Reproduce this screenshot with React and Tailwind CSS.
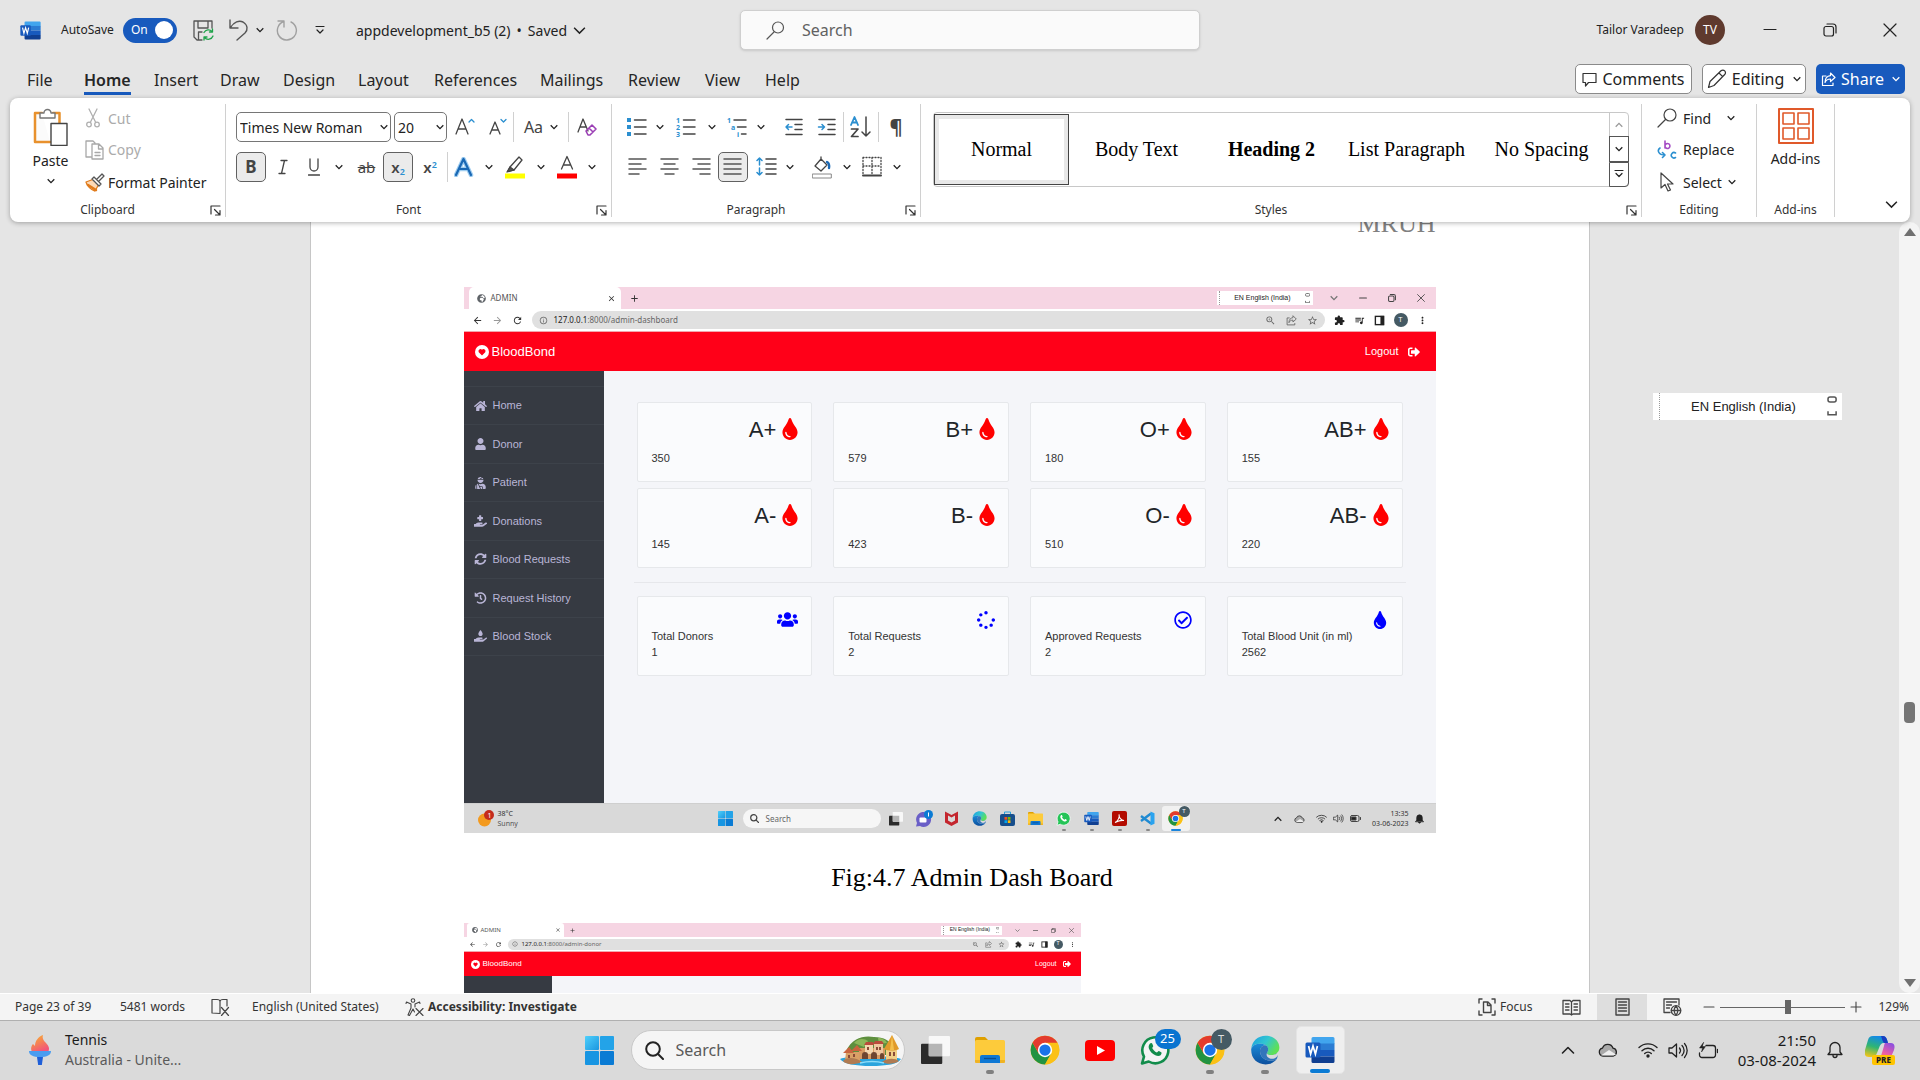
import React from "react";
import {
  FaHome, FaUser, FaUserInjured, FaHandHoldingMedical, FaSyncAlt, FaHistory,
  FaHandHoldingWater, FaUsers, FaSpinner, FaRegCheckCircle, FaTint, FaSignOutAlt, FaGlobeAfrica,
} from "react-icons/fa";
import {
  MdArrowBack, MdArrowForward, MdRefresh, MdInfoOutline, MdZoomIn, MdStarBorder,
  MdExtension, MdQueueMusic, MdMoreVert, MdClose, MdAdd,
} from "react-icons/md";

const ui = "font-['Noto_Sans','Open_Sans',sans-serif]";
const serif = "font-['Liberation_Serif','Times_New_Roman',serif]";
const arial = "font-['Liberation_Sans',Arial,sans-serif]";

/* ---------- small drawing helpers ---------- */

function Icon({ w = 20, h = w, box, className = "", children, sw = 1.3, color = "#444" }) {
  return (
    <svg width={w} height={h} viewBox={box || `0 0 ${w} ${h}`} fill="none" stroke={color} strokeWidth={sw}
      strokeLinecap="round" strokeLinejoin="round" className={`shrink-0 ${className}`} aria-hidden="true">
      {children}
    </svg>
  );
}

const Chevron = ({ color = "#222", size = 8 }) => (
  <svg width={size} height={size} viewBox="0 0 8 8" fill="none" stroke={color} strokeWidth={size > 8 ? 0.9 : 1.3} className="shrink-0" aria-hidden="true">
    <path d="M0.7 2.3 4 5.6l3.3-3.3" />
  </svg>
);

const Sep = () => <span className="h-[30px] w-px shrink-0 bg-[#d0d0d0]" />;

function Tool({ label, w, active, children }) {
  return (
    <button type="button" aria-label={label} aria-pressed={active}
      className={`flex h-[30px] shrink-0 items-center justify-center ${w} ${active ? "rounded-[5px] border border-[#616161] bg-[#ebebeb]" : ""}`}>
      {children}
    </button>
  );
}

const Drop = ({ label, w = "w-[22px]" }) => <Tool label={label} w={w}><Chevron /></Tool>;

function WordLogo({ className }) {
  return (
    <svg viewBox="0 0 30 30" className={className} aria-hidden="true">
      <path d="M8 2h20a1.500 1.500 0 0 1 1.500 1.500V9H6.500V3.500A1.500 1.500 0 0 1 8 2Z" fill="#41a5ee" />
      <path d="M6.500 8.500h23V15h-23z" fill="#2b7cd3" />
      <path d="M6.500 15h23v6.500h-23z" fill="#185abd" />
      <path d="M6.500 21.500h23v5A1.500 1.500 0 0 1 28 28H8a1.500 1.500 0 0 1-1.500-1.500z" fill="#103f91" />
      <rect x="0.500" y="7.500" width="15" height="15" rx="1.500" fill="#185abd" />
      <path d="m3.600 11 2 8 2.400-8 2.400 8 2-8" fill="none" stroke="#fff" strokeWidth="1.700" />
    </svg>
  );
}

function WindowsLogo({ className }) {
  return (
    <svg viewBox="0 0 30 30" className={className} aria-hidden="true">
      <defs>
        <linearGradient id="win" x1="0" y1="0" x2="1" y2="1" gradientUnits="objectBoundingBox">
          <stop offset="0" stopColor="#4fd0fb" /><stop offset="1" stopColor="#1a96e0" />
        </linearGradient>
      </defs>
      <rect x="0" y="0" width="14.500" height="14.500" rx="1" fill="url(#win)" />
      <rect x="15.500" y="0" width="14.500" height="14.500" rx="1" fill="#23a3e8" />
      <rect x="0" y="15.500" width="14.500" height="14.500" rx="1" fill="#1795e2" />
      <rect x="15.500" y="15.500" width="14.500" height="14.500" rx="1" fill="#0a7bd4" />
    </svg>
  );
}

function ChromeLogo({ className }) {
  return (
    <svg viewBox="0 0 48 48" className={className} aria-hidden="true">
      <circle cx="24" cy="24" r="23" fill="#fbc116" />
      <path d="M4.100 12.500A23 23 0 0 0 24 47l10-17.300L14 29.700Z" fill="#229342" />
      <path d="M24 12.500h19.900A23 23 0 0 1 24 47l10-17.500Z" fill="#fbc116" />
      <path d="M4.100 12.500A23 23 0 0 1 43.900 12.500H24L14 29.700Z" fill="#e33b2e" />
      <circle cx="24" cy="24" r="11.500" fill="#fff" />
      <circle cx="24" cy="24" r="9" fill="#1a73e8" />
    </svg>
  );
}

function EdgeLogo({ className }) {
  return (
    <svg viewBox="0 0 48 48" className={className} aria-hidden="true">
      <defs>
        <linearGradient id="edgeA" x1="0" y1="0" x2="1" y2="0.500">
          <stop offset="0" stopColor="#1b9de2" /><stop offset="0.550" stopColor="#32c7d0" /><stop offset="1" stopColor="#5fe055" />
        </linearGradient>
        <linearGradient id="edgeB" x1="0" y1="0" x2="0" y2="1">
          <stop offset="0" stopColor="#1a8bd8" /><stop offset="1" stopColor="#0c4f9e" />
        </linearGradient>
      </defs>
      <path d="M2 22C3 9 13 1 25 1c13 0 22 9 22 19 0 8-6 12-13 12-5 0-7-2-7-3s2-2 2-6c0-6-6-9-13-9C9 14 4 17 2 22Z" fill="url(#edgeA)" />
      <path d="M2 22c2-5 7-8 14-8 4 0 8 1 10 3-6-1-10 3-10 9 0 9 8 15 17 15 4 0 8-1 10-3-4 6-11 9-18 9C11 47 1 37 2 22Z" fill="url(#edgeB)" />
      <path d="M16 26c0-6 4-10 10-9 2 1 3 3 3 6 0 4-2 5-2 6s2 3 7 3c4 0 7-1 9-3 2 2 1 7 0 9-2 2-6 3-10 3-9 0-17-6-17-15Z" fill="#1563b5" opacity="0.850" />
      <path d="M27 29c0 1 2 3 7 3 5 0 8-1 11-5 1 1 1 4-1 6-2 4-6 5-9 5-5 0-10-4-8-9Z" fill="#dadada" />
    </svg>
  );
}

function FolderLogo({ className }) {
  return (
    <svg viewBox="0 0 30 28" className={className} aria-hidden="true">
      <path d="M0 3a2 2 0 0 1 2-2h8l3 3v5H0Z" fill="#dfa000" />
      <rect x="0" y="4" width="30" height="23" rx="1.500" fill="#fdcb3b" />
      <path d="M0 24h30v1.500a1.500 1.500 0 0 1-1.500 1.500h-27A1.500 1.500 0 0 1 0 25.500Z" fill="#f0b323" />
      <path d="M5 27v-6a2 2 0 0 1 2-2h16a2 2 0 0 1 2 2v6Z" fill="#0f78d4" />
      <path d="M9 22.500h12" stroke="#0b4f94" strokeWidth="1.400" />
    </svg>
  );
}

function TaskViewLogo({ className }) {
  return (
    <svg viewBox="0 0 30 30" className={className} aria-hidden="true">
      <rect x="0" y="8" width="22" height="21" rx="1" fill="#2b2b2b" />
      <rect x="8" y="0" width="22" height="21" rx="1" fill="#f8f8f8" />
      <path d="M8 8h14v13H9a1 1 0 0 1-1-1Z" fill="#b5b5b5" />
    </svg>
  );
}

function WhatsAppLogo({ className, solid }) {
  return (
    <svg viewBox="0 0 30 30" className={className} aria-hidden="true">
      <path d="M2 28.500 4 21.700A13 13 0 1 1 8.700 26.500Z" fill={solid ? "#25c457" : "#f4f4f4"} stroke={solid ? "#fff" : "#128c4b"} strokeWidth={solid ? 1.500 : 2.600} strokeLinejoin="round" />
      <path d="M10 8.500c1-1 2-.5 2.300.3l.9 2.200c.2.500-1 1.700-1 2.100.8 1.900 2.500 3.500 4.600 4.500.5.100 1.500-1.700 2.100-1.500l2.300 1.200c.7.400.4 2-.6 2.900-1.300 1.100-3.200 1-5.300.1-3-1.300-5.500-3.900-6.400-6.700-.7-2 .1-4.200 1.100-5.100Z" fill={solid ? "#fff" : "#128c4b"} />
    </svg>
  );
}

/* ---------- title bar and tabs ---------- */

function TitleBar() {
  return (
    <header className="flex h-[60px] shrink-0 items-center">
      <div className="flex min-w-0 flex-1 items-center pl-5">
        <WordLogo className="h-[21px] w-[21px]" />
        <label htmlFor="autosave" className="ml-[20px] w-[62px] text-[12px] text-[#222]">AutoSave</label>
        <label className="relative flex h-[25px] w-[54px] cursor-pointer items-center rounded-full bg-[#185abd] pl-2 text-[12px] text-white">
          <input id="autosave" type="checkbox" role="switch" defaultChecked className="peer sr-only" />
          On
          <span className="absolute right-[4px] h-[18px] w-[18px] rounded-full bg-white" />
        </label>
        <button type="button" aria-label="Save" className="ml-[16px]">
          <Icon w={21} sw={1.3} color="#555">
            <path d="M9 20H4l-3-3V1h18v7M5 1v7h10V1M5.500 19v-7H9" />
            <path d="M11 12.500a5 5 0 0 1 8-1m.5-2.500v3h-3M20 16a5 5 0 0 1-8.500 1.500M11 20v-3h3" stroke="#1fa34a" />
          </Icon>
        </button>
        <button type="button" aria-label="Undo" className="ml-[15px]">
          <Icon w={20} h={22} sw={1.4} color="#555"><path d="M1 1v8h8M1.500 8.500C5 3 10 1 14 3c5 3 5 8 2 11l-8 7" /></Icon>
        </button>
        <button type="button" aria-label="Undo history" className="ml-[7px]"><Chevron /></button>
        <button type="button" aria-label="Redo" className="ml-[12px]">
          <Icon w={22} h={22} sw={1.4} color="#a0a0a0"><path d="M2 2h6v6M8 2.500A9.500 9.500 0 1 0 15 3" /></Icon>
        </button>
        <button type="button" aria-label="Customize toolbar" className="ml-[17px]">
          <Icon w={10} h={10} sw={1.2} color="#222"><path d="M1 1.500h8M2 5l3 3 3-3" /></Icon>
        </button>
        <button type="button" className="ml-[31px] flex items-center gap-[6px] text-[14px] whitespace-nowrap text-[#222]">
          <span>appdevelopment_b5 (2)</span><span>•</span><span>Saved</span><Chevron size={13} />
        </button>
      </div>
      <div className="flex h-[40px] w-[460px] shrink-0 items-center rounded-[5px] border border-[#cfcfcf] bg-[#fafafa] pl-[25px] shadow-sm">
        <Icon w={19} h={19} sw={1.2} color="#555"><circle cx="12" cy="6.500" r="5.500" /><path d="m8 11-7 7" /></Icon>
        <input aria-label="Search" placeholder="Search" className="ml-[17px] min-w-0 flex-1 bg-transparent text-[16px] outline-none placeholder:text-[#616161]" />
      </div>
      <div className="flex min-w-0 flex-1 items-center justify-end">
        <button type="button" className="flex items-center gap-[11px] text-[12px] whitespace-nowrap text-[#222]">
          Tailor Varadeep
          <span className="flex h-[30px] w-[30px] items-center justify-center rounded-full bg-[#5f3a2e] text-[12px] text-white">TV</span>
        </button>
        <div className="ml-[15px] flex">
          <button type="button" aria-label="Minimize" className="flex w-[60px] justify-center"><Icon w={14} sw={1.2} color="#222"><path d="M1 6.500h12" /></Icon></button>
          <button type="button" aria-label="Restore" className="flex w-[60px] justify-center"><Icon w={14} sw={1.2} color="#222"><rect x="1" y="3.500" width="9.500" height="9.500" rx="2" /><path d="M4 1h6a3 3 0 0 1 3 3v6" /></Icon></button>
          <button type="button" aria-label="Close" className="flex w-[60px] justify-center"><Icon w={14} sw={1.2} color="#222"><path d="m1 1 12 12M13 1 1 13" /></Icon></button>
        </div>
      </div>
    </header>
  );
}

const tabs = [
  ["File", "w-[57px]"], ["Home", "w-[70px]"], ["Insert", "w-[66px]"], ["Draw", "w-[63px]"], ["Design", "w-[75px]"],
  ["Layout", "w-[76px]"], ["References", "w-[106px]"], ["Mailings", "w-[88px]"], ["Review", "w-[77px]"], ["View", "w-[60px]"], ["Help", "w-[50px]"],
];

function Tabs() {
  return (
    <div className="flex h-[38px] shrink-0 items-start justify-between pr-[15px] pl-[27px]">
      <nav className="flex text-[16px] leading-[24px] text-[#262626]">
        {tabs.map(([name, w]) => (
          <div key={name} className={`pt-[7px] ${w}`}>
            <button type="button" className={name === "Home" ? "h-[28px] border-b-[3px] border-[#185abd] font-semibold" : "h-[28px] border-b-[3px] border-transparent"}>{name}</button>
          </div>
        ))}
      </nav>
      <div className="flex gap-[10px] pt-[4px] text-[16px] whitespace-nowrap">
        <button type="button" className="flex h-[30px] w-[117px] items-center justify-center gap-[5px] rounded-[5px] border border-[#8a8a8a] bg-white text-[#222]">
          <Icon w={15} sw={1.2} color="#333"><path d="M1 1.500h13v9H6.500L3.500 14v-3.500H1Z" /></Icon>Comments
        </button>
        <button type="button" className="flex h-[30px] w-[104px] items-center justify-center gap-[5px] rounded-[5px] border border-[#8a8a8a] bg-white text-[#222]">
          <Icon w={20} sw={1.2} color="#333"><path d="m1.500 18.500 1.500-6L14 1.800a2.500 2.500 0 0 1 3.700 3.700L7 16.500ZM12 4l3.700 3.700" /></Icon>Editing<span className="ml-1"><Chevron /></span>
        </button>
        <button type="button" className="flex h-[30px] w-[89px] items-center justify-center gap-[5px] rounded-[5px] bg-[#185abd] text-white">
          <Icon w={15} sw={1.2} color="#fff"><path d="M5 4H1.500v9.500H12V11M9.500 1l4.500 4.500L9.500 9.500V7C7 7 5 8 4 10.500 4 6.500 6 4 9.500 3.600Z" /></Icon>Share<span className="ml-[3px]"><Chevron color="#fff" /></span>
        </button>
      </div>
    </div>
  );
}

/* ---------- ribbon ---------- */

const Launcher = () => (
  <button type="button" aria-label="More options" className="flex w-[20px] justify-center">
    <Icon w={11} sw={1.2} color="#333"><path d="M1 9V1h9M4.500 4.500l5 5M10 5.500V10H5.500" /></Icon>
  </button>
);

function Group({ title, w, launcher = true, children }) {
  return (
    <section aria-label={title} className={`flex h-[113px] flex-col border-r border-[#d0d0d0] ${w}`}>
      <div className="min-h-0 flex-1">{children}</div>
      <div className="flex h-[14px] items-center text-[12px] text-[#333]">
        <span className="flex-1 text-center">{title}</span>
        {launcher && <Launcher />}
      </div>
    </section>
  );
}

function Clipboard() {
  const item = "flex items-center gap-[7px] text-[14px] whitespace-nowrap";
  return (
    <Group title="Clipboard" w="w-[216px] shrink-0">
      <div className="flex">
        <button type="button" className="flex w-[75px] flex-col items-center pt-[4px] pl-[6px] text-[14px] text-[#222]">
          <Icon w={35} h={38} sw={1.4} color="#555">
            <path d="M9 5H2v29h15" fill="#fbfbfb" stroke="#e8912d" strokeWidth="2.500" />
            <path d="M20 5h6.500v10" stroke="#e8912d" strokeWidth="2.500" />
            <path d="M7 10V5h4a3.500 3.500 0 0 1 7 0h4v5Z" fill="#fff" stroke="#767676" />
            <rect x="18" y="15.500" width="16" height="22" fill="#fff" stroke="#444" />
          </Icon>
          <span className="mt-[5px] leading-[20px]">Paste</span>
          <span className="mt-[6px]"><Chevron /></span>
        </button>
        <div>
          <button type="button" className={`${item} h-[28px] text-[#ababab]`}>
            <span className="flex w-[16px] justify-center"><Icon w={14} h={20} color="#b0b0b0"><path d="m3 1 6.500 13M11 1 4.500 14" /><circle cx="3" cy="16.500" r="2.300" /><circle cx="11" cy="16.500" r="2.300" /></Icon></span>Cut
          </button>
          <button type="button" className={`${item} h-[35px] text-[#ababab]`}>
            <Icon w={19} h={20} color="#a8a8a8" className="-mr-[3px]"><path d="M6 17H1V1h7l2 2M7 4h7l4 4v11H7ZM13.500 4v5H18M10 12.500h5M10 15.500h5" /></Icon>Copy
          </button>
          <button type="button" className={`${item} h-[30px] text-[#222]`}>
            <Icon w={20} h={19} className="-mr-[4px]" color="#555"><path d="M1 9 9 6l5 5-4 7C6 17 2 13 1 9Z" fill="#fdd9b5" stroke="#e07b1c" /><path d="m3 12 8 5" stroke="#e07b1c" strokeWidth="2.500" /><path d="m7 6 2-2 7 7-2 2ZM12 6l5-5 2 2-5 5" fill="#fff" /></Icon>Format Painter
          </button>
        </div>
      </div>
    </Group>
  );
}

const Glyph = ({ children, className = "" }) => <span className={`text-[#444] ${className}`}>{children}</span>;

function FontGroup() {
  const sel = "h-[30px] w-full appearance-none rounded-[5px] border border-[#767676] bg-white pl-[3px] text-[14px] text-[#222]";
  return (
    <Group title="Font" w="w-[386px] shrink-0">
      <div className="flex pt-[8px] pl-[10px]">
        <span className="relative mr-[3px] flex w-[155px] items-center">
          <select aria-label="Font" className={sel}><option>Times New Roman</option></select>
          <span className="pointer-events-none absolute right-[3px]"><Chevron /></span>
        </span>
        <span className="relative flex w-[53px] items-center">
          <select aria-label="Font size" className={sel}><option>20</option></select>
          <span className="pointer-events-none absolute right-[3px]"><Chevron /></span>
        </span>
        <Tool label="Grow font" w="w-[36px]"><Icon w={20} h={20}><path d="m1 17 6-15 6 15M3 12h8" /><path d="m14 5 2.500-2.500L19 5" stroke="#2b8fd0" /></Icon></Tool>
        <Tool label="Shrink font" w="w-[30px]"><Icon w={18} h={20}><path d="m1 17 5-12 5 12M3 13h6" /><path d="m12 2.500 2.500 2.500L17 2.500" stroke="#2b8fd0" /></Icon></Tool>
        <Sep />
        <Tool label="Change case" w="w-[54px]"><Glyph className="mr-[7px] text-[16px]">Aa</Glyph><Chevron /></Tool>
        <Sep />
        <Tool label="Clear formatting" w="w-[36px]"><Icon w={21} h={20}><path d="m1 15 5-13 5 12M3 10h6" /><path d="m9 14 6-6 4 4-6 6h-2Zm3-3 4 4" stroke="#9b3fb5" strokeWidth="1.600" /></Icon></Tool>
      </div>
      <div className="flex pt-[10px] pl-[10px]">
        <Tool label="Bold" w="w-[30px]" active><Glyph className="text-[17px] font-bold">B</Glyph></Tool>
        <Tool label="Italic" w="w-[34px]"><Icon w={10} h={16}><path d="M3 1.500h6M1 14.500h6M6.500 1.500l-3 13" /></Icon></Tool>
        <Tool label="Underline" w="w-[28px]"><Icon w={12} h={18}><path d="M2 1v8a4 4 0 0 0 8 0V1M.5 17h11" /></Icon></Tool>
        <Drop label="Underline style" />
        <Tool label="Strikethrough" w="w-[33px]"><Glyph className="text-[15px] line-through">ab</Glyph></Tool>
        <Tool label="Subscript" w="w-[30px]" active><Glyph className="text-[15px] font-semibold">x<sub className="text-[9px] text-[#2b8fd0]">2</sub></Glyph></Tool>
        <Tool label="Superscript" w="w-[34px]"><Glyph className="text-[15px] font-semibold">x<sup className="text-[9px] text-[#2b8fd0]">2</sup></Glyph></Tool>
        <Sep />
        <Tool label="Text effects" w="w-[32px]"><Icon w={20} h={20}><path d="m2 18 7.500-16 7.500 16M5 12h9" stroke="#9fcdf0" strokeWidth="4.500" /><path d="m2 18 7.500-16 7.500 16M5 12h9" stroke="#1a68b4" strokeWidth="2.200" /></Icon></Tool>
        <Drop label="Text effects menu" w="w-[17px]" />
        <Tool label="Highlight" w="w-[36px]"><Icon w={20} h={24}><path d="M5 12 14 2l3 3-8 10-6 1Z" fill="#fff" /><path d="m2 17 3-5 4 3Z" fill="#555" /><path d="M0 18.500h20v5H0z" fill="#ff0" stroke="none" /></Icon></Tool>
        <Drop label="Highlight colour" w="w-[16px]" />
        <Tool label="Font colour" w="w-[35px]"><Icon w={20} h={24}><path d="m4.500 14 5.500-12.500L15.500 14M6.500 10h7" /><path d="M0 18.500h20v5H0z" fill="#f00" stroke="none" /></Icon></Tool>
        <Drop label="Font colour menu" w="w-[16px]" />
      </div>
    </Group>
  );
}

const LinesIcon = ({ rows, className }) => (
  <Icon w={20} h={20} sw={1.5} color="#555" className={className}>{rows.map(([a, b], i) => <path key={i} d={`M${a} ${2 + i * 5}H${b}`} />)}</Icon>
);

function Paragraph() {
  const dot = { fill: "#2b8fd0", stroke: "none" };
  const num = { fill: "#2b8fd0", stroke: "none", fontSize: 7, fontWeight: 700 };
  return (
    <Group title="Paragraph" w="w-[309px] shrink-0">
      <div className="flex pt-[8px] pl-[13px]">
        <Tool label="Bullets" w="w-[24px]"><Icon w={20} sw={1.5}><path d="M7.500 3H19M7.500 10H19M7.500 17H19" /><rect x="0" y="1" width="4" height="4" {...dot} /><rect x="0" y="8" width="4" height="4" {...dot} /><rect x="0" y="15" width="4" height="4" {...dot} /></Icon></Tool>
        <Drop label="Bullet styles" />
        <Tool label="Numbering" w="w-[30px]"><Icon w={20} sw={1.5}><path d="M7.500 3H19M7.500 10H19M7.500 17H19" /><text x="0" y="5.500" {...num}>1</text><text x="0" y="12.500" {...num}>2</text><text x="0" y="19.500" {...num}>3</text></Icon></Tool>
        <Drop label="Number formats" w="w-[21px]" />
        <Tool label="Multilevel list" w="w-[29px]"><Icon w={20} sw={1.5}><path d="M7 3h12M10.500 10H19M14.500 17H19" /><text x="0" y="5.500" {...num}>1</text><text x="4" y="12.500" {...num}>a</text><text x="10" y="19.500" {...num}>i</text></Icon></Tool>
        <Drop label="List styles" w="w-[20px]" />
        <span className="ml-[6px]"><Sep /></span>
        <Tool label="Decrease indent" w="w-[33px]"><Icon w={20} sw={1.5}><path d="M2 2.500h16M11 7.500h7M11 12.500h7M2 17.500h16" /><path d="M8 10H2m2.500-2.500L2 10l2.500 2.500" stroke="#2b8fd0" /></Icon></Tool>
        <Tool label="Increase indent" w="w-[33px]"><Icon w={20} sw={1.5}><path d="M2 2.500h16M11 7.500h7M11 12.500h7M2 17.500h16" /><path d="M1.500 10h6M5 7.500 7.500 10 5 12.500" stroke="#2b8fd0" /></Icon></Tool>
        <Sep />
        <Tool label="Sort" w="w-[34px]"><Icon w={22} h={22} sw={1.5}><path d="M1 9 4.500 1 8 9M2 6.500h5" stroke="#2b8fd0" strokeWidth="1.800" /><path d="M1.500 13H8L1.500 20.500H8" strokeWidth="1.700" /><path d="M16 1v19m-4-4 4 4 4-4" /></Icon></Tool>
        <Sep />
        <Tool label="Show marks" w="w-[34px]"><Glyph className="text-[20px] font-bold">¶</Glyph></Tool>
      </div>
      <div className="flex pt-[10px] pl-[10px]">
        <Tool label="Align left" w="w-[32px]"><LinesIcon rows={[[1, 18], [1, 13], [1, 18], [1, 11]]} /></Tool>
        <Tool label="Centre" w="w-[32px]"><LinesIcon rows={[[1, 18], [4, 15], [1, 18], [5, 14]]} /></Tool>
        <Tool label="Align right" w="w-[32px]"><LinesIcon rows={[[1, 18], [6, 18], [1, 18], [8, 18]]} /></Tool>
        <Tool label="Justify" w="w-[30px]" active><LinesIcon rows={[[1, 18], [1, 18], [1, 18], [1, 18]]} /></Tool>
        <span className="ml-[2px]"><Sep /></span>
        <Tool label="Line spacing" w="w-[32px]"><Icon w={21} sw={1.5}><path d="M10 2h10M10 7h10M10 12h10M10 17h10" /><path d="M3.500 1v7M1 3.500 3.500 1 6 3.500M3.500 11v7M1 15.500 3.500 18 6 15.500" stroke="#2b8fd0" /></Icon></Tool>
        <Drop label="Spacing options" w="w-[16px]" />
        <span className="ml-[7px]"><Sep /></span>
        <Tool label="Shading" w="w-[34px]"><Icon w={20} h={23}><path d="m3 10 6-7 6 6-6 6ZM9 3v-2" /><path d="M15 6c2 1 2.500 3 2 6" stroke="#1a68b4" strokeWidth="2.400" /><path d="M.7 18h18.600v4H.7z" fill="#fff" stroke="#888" strokeWidth="1" /></Icon></Tool>
        <Drop label="Shading colour" w="w-[16px]" />
        <Tool label="Borders" w="w-[34px]"><Icon w={20} h={22} sw={1.3}><path d="M1 1.500h18M1 10h18M1 1.500V19M10 1.500V19M19 1.500V19" strokeDasharray="1 2" /><path d="M1 19.500h18" strokeWidth="2" /></Icon></Tool>
        <Drop label="Border options" w="w-[16px]" />
      </div>
    </Group>
  );
}

function Styles() {
  const names = ["Normal", "Body Text", "Heading 2", "List Paragraph", "No Spacing"];
  return (
    <Group title="Styles" w="min-w-0 flex-1">
      <div className="mt-[8px] mr-[12px] ml-[12px] flex h-[75px] rounded-[4px] border border-[#c8c8c8]">
        <div className={`grid min-w-0 flex-1 grid-cols-5 text-[20px] text-black ${serif}`}>
          {names.map((n) => (
            <button key={n} type="button" className={`my-[1px] min-w-0 whitespace-nowrap ${n === "Normal" ? "border border-[#444]" : ""} ${n === "Heading 2" ? "font-bold" : ""}`}>
              <span className={`flex h-full items-center justify-center pb-[2px] ${n === "Normal" ? "border-[4px] border-[#e8e8e8]" : ""}`}>{n}</span>
            </button>
          ))}
        </div>
        <div className="flex w-[19px] flex-col">
          <button type="button" aria-label="Previous styles" className="flex flex-1 items-center justify-center border-l border-[#c8c8c8]"><span className="rotate-180"><Chevron color="#999" /></span></button>
          <button type="button" aria-label="Next styles" className="-mr-px flex flex-1 items-center justify-center border border-[#555]"><Chevron /></button>
          <button type="button" aria-label="All styles" className="-mr-px -mb-px flex flex-1 items-center justify-center rounded-br-[4px] border border-[#555]"><Icon w={10} h={10} sw={1.2} color="#222"><path d="M1 1.500h8M2 4.500l3 3 3-3" /></Icon></button>
        </div>
      </div>
    </Group>
  );
}

function Ribbon() {
  const item = "flex items-center gap-[6px] text-[14px] text-[#222]";
  return (
    <div className="relative z-10 mx-[10px] flex h-[124px] shrink-0 rounded-[8px] bg-white pt-[6px] shadow-[0_1px_5px_rgba(0,0,0,0.300)]">
      <Clipboard />
      <FontGroup />
      <Paragraph />
      <Styles />
      <Group title="Editing" w="w-[115px] shrink-0" launcher={false}>
        <div className="pl-[15px]">
          <button type="button" className={`${item} h-[28px]`}><Icon w={20} sw={1.2}><circle cx="13" cy="7" r="6" /><path d="M8.500 11.500 1 19" /></Icon>Find<span className="ml-[10px]"><Chevron /></span></button>
          <button type="button" className={`${item} h-[35px]`}><Icon w={20} sw={1.6}><path d="M8 1v7M8 5.500a2.500 2.500 0 1 1 0 1" stroke="#a44bc4" /><path d="M3 8c-3 2-2 7 5 7M5.500 12.500 8 15l-2.500 2.500M18.500 13a2.700 2.700 0 1 0 0 4.500" stroke="#2b8fd0" /></Icon>Replace</button>
          <button type="button" className={`${item} h-[30px]`}><Icon w={20} sw={1.2}><path d="M4 1v15l4-3.500L11 19l2.500-1-3-6H16Z" /></Icon>Select<Chevron /></button>
        </div>
      </Group>
      <Group title="Add-ins" w="w-[78px] shrink-0" launcher={false}>
        <button type="button" className="flex w-full flex-col items-center pt-[4px] text-[14px] text-[#222]">
          <Icon w={36} sw={1.6} color="#e0592a"><rect x="1" y="1" width="34" height="34" strokeWidth="2" /><rect x="5" y="5" width="11" height="11" /><rect x="20" y="5" width="11" height="11" /><rect x="5" y="20" width="11" height="11" /><rect x="20" y="20" width="11" height="11" /></Icon>
          <span className="mt-[5px] leading-[20px]">Add-ins</span>
        </button>
      </Group>
      <div className="flex w-[75px] shrink-0 items-end justify-end pr-[12px] pb-[11px]">
        <button type="button" aria-label="Ribbon display options"><Chevron size={13} /></button>
      </div>
    </div>
  );
}

/* ---------- browser pictures placed in the page ---------- */

const big = {
  frame: "w-full", strip: "h-[22px] pl-[5px]", tab: "h-[22px] w-[152px] rounded-t-[5px] pr-[5px] pl-[8px] text-[8px] gap-[5px]",
  plus: "ml-[8px]", icon: "text-[11px]", close: "text-[9px]", addr: "h-[22px] px-[8px] gap-[9px]", pill: "h-[18px] px-[7px] gap-[6px] text-[8px]",
  lang: "h-[14px] w-[96px] text-[7px]", win: "w-[29px]", red: "h-[40px] px-[11px]", brand: "text-[13px] gap-[3px]", heart: "h-[14px] w-[14px]",
  logout: "text-[11px] gap-[9px] pr-[5px]", logoutIcon: "text-[12px]", avatar: "h-[14px] w-[14px] text-[7px]", winIcon: 8, gap: "gap-[10px]", tools: "gap-[9px]",
};
const small = {
  frame: "w-[617px]", strip: "h-[14px] pl-[3px]", tab: "h-[14px] w-[97px] rounded-t-[3px] pr-[3px] pl-[5px] text-[6px] gap-[3px]",
  plus: "ml-[5px]", icon: "text-[7px]", close: "text-[6px]", addr: "h-[14px] px-[5px] gap-[6px]", pill: "h-[11px] px-[4px] gap-[4px] text-[6px]",
  lang: "h-[9px] w-[61px] text-[5px]", win: "w-[18px]", red: "h-[25px] px-[7px]", brand: "text-[8px] gap-[3px]", heart: "h-[9px] w-[9px]",
  logout: "text-[7px] gap-[6px] pr-[3px]", logoutIcon: "text-[8px]", avatar: "h-[9px] w-[9px] text-[5px]", winIcon: 5, gap: "gap-[6px]", tools: "gap-[6px]",
};

function LanguageBar({ className }) {
  return (
    <div className={`flex items-center justify-between bg-white whitespace-nowrap text-[#222] ${className}`}>
      <span className="ml-[2px] h-full border-l border-dotted border-[#999]" />
      <span>EN English (India)</span>
      <svg viewBox="0 0 10 20" className="mr-[2px] h-3/4" fill="none" stroke="#555" strokeWidth="1.500" aria-hidden="true"><rect x="1" y="1" width="8" height="5" rx="2" /><path d="M1 15v3.500h8V15" /></svg>
    </div>
  );
}

function Browser({ s, path, children }) {
  return (
    <div className={`${s.frame} ${arial}`}>
      <div className={`flex items-center bg-[#f6d5e3] text-[#333] ${s.strip}`}>
        <div className={`flex items-center bg-white ${s.tab}`}>
          <FaGlobeAfrica className={`text-[#5f6368] ${s.close}`} />
          <span className={`flex-1 text-[#555] ${ui}`}>ADMIN</span>
          <MdClose className={s.close} />
        </div>
        <MdAdd className={`${s.plus} ${s.icon}`} />
        <LanguageBar className={`ml-auto ${s.lang}`} />
        <span className={`flex justify-center ${s.win} ml-[7px]`}><Chevron size={s.winIcon} color="#777" /></span>
        <span className={`flex justify-center ${s.win}`}><Icon w={s.winIcon} box="0 0 14 14" sw={1.8}><path d="M1 7h12" /></Icon></span>
        <span className={`flex justify-center ${s.win}`}><Icon w={s.winIcon} box="0 0 14 14" sw={1.8}><rect x="1" y="3.500" width="9.500" height="9.500" rx="2" /><path d="M4 1h6a3 3 0 0 1 3 3v6" /></Icon></span>
        <span className={`flex justify-center ${s.win}`}><Icon w={s.winIcon} box="0 0 14 14" sw={1.5}><path d="m1 1 12 12M13 1 1 13" /></Icon></span>
      </div>
      <div className={`flex items-center bg-white text-[#333] ${s.addr}`}>
        <MdArrowBack className={s.icon} /><MdArrowForward className={`${s.icon} text-[#999]`} /><MdRefresh className={s.icon} />
        <div className={`flex min-w-0 flex-1 items-center rounded-full bg-[#e0e0e0] text-[#666] ${s.pill} ${ui}`}>
          <MdInfoOutline className={s.close} />
          <span className="flex-1 whitespace-nowrap"><span className="text-[#222]">127.0.0.1</span>:8000/{path}</span>
          <span className={`flex ${s.gap} ${s.icon}`}><MdZoomIn /><svg width="1em" height="1em" viewBox="0 0 15 15" fill="none" stroke="currentColor" strokeWidth="1.200" aria-hidden="true"><path d="M5 4H1.500v9.500H12V11M9.500 1l4.500 4.500L9.500 9.500V7C7 7 5 8 4 10.500 4 6.500 6 4 9.500 3.600Z" /></svg><MdStarBorder /></span>
        </div>
        <span className={`flex items-center text-[#222] ${s.tools} ${s.icon}`}>
          <MdExtension /><MdQueueMusic />
          <svg width="1em" height="1em" viewBox="0 0 12 12" aria-hidden="true"><rect x="1.500" y="1.500" width="9" height="9" fill="none" stroke="#222" strokeWidth="1.500" /><path d="M7 1h4v10H7z" fill="#222" /></svg>
          <span className={`flex items-center justify-center rounded-full bg-[#455a64] text-white ${s.avatar}`}>T</span>
          <MdMoreVert />
        </span>
      </div>
      <div className={`flex items-center justify-between border-t border-[#f3a5ad] bg-[#ff0018] text-white ${s.red}`}>
        <a href="#home" className={`flex items-center ${s.brand}`}>
          <svg viewBox="0 0 16 16" className={s.heart} aria-hidden="true"><circle cx="8" cy="8" r="8" fill="#fff" /><path d="M8 12 4.300 8.200A2.300 2.300 0 0 1 8 5.500a2.300 2.300 0 0 1 3.700 2.700Z" fill="#ff0018" /></svg>
          BloodBond
        </a>
        <a href="#logout" className={`flex items-center ${s.logout}`}>Logout<FaSignOutAlt className={s.logoutIcon} /></a>
      </div>
      {children}
    </div>
  );
}

const menu = [
  ["Home", FaHome], ["Donor", FaUser], ["Patient", FaUserInjured], ["Donations", FaHandHoldingMedical],
  ["Blood Requests", FaSyncAlt], ["Request History", FaHistory], ["Blood Stock", FaHandHoldingWater],
];
const blood = [["A+", 350], ["B+", 579], ["O+", 180], ["AB+", 155], ["A-", 145], ["B-", 423], ["O-", 510], ["AB-", 220]];
const totals = [
  ["Total Donors", 1, FaUsers, "text-[21px]"], ["Total Requests", 2, FaSpinner, "text-[18px]"],
  ["Approved Requests", 2, FaRegCheckCircle, "text-[18px]"], ["Total Blood Unit (in ml)", 2562, FaTint, "text-[18px]"],
];

function Dashboard() {
  const card = "flex h-[80px] flex-col rounded-[2px] border border-[#e6e8eb] bg-[#fafbfd] pr-[13px] pl-[14px]";
  return (
    <div className="flex h-[432px]">
      <nav className="w-[140px] shrink-0 bg-[#363a42] pt-[15px]">
        <div className="flex h-[270px] flex-col border-b border-[#3d424a]">
          {menu.map(([name, I]) => (
            <a key={name} href="#menu" className="flex flex-1 items-center gap-[6px] border-t border-[#3d424a] pl-[10px] text-[11px] text-[#b9b5d6]">
              <I className="w-[13px] text-[12px]" />{name}
            </a>
          ))}
        </div>
      </nav>
      <div className="min-w-0 flex-1 bg-[#f4f5f9] px-[33px] pt-[31px] text-[11px] text-[#333]">
        <div className="grid grid-cols-4 gap-x-[21px] gap-y-[6px]">
          {blood.map(([t, n]) => (
            <div key={t} className={card}>
              <div className="mt-[11px] flex h-[30px] items-center justify-end gap-[6px] text-[22px] text-[#212529]">{t}<FaTint className="w-[16px] text-[22px] text-[#f00]" /></div>
              <p className="mt-[6px] leading-[16px]">{n}</p>
            </div>
          ))}
        </div>
        <hr className="-mx-[3px] mt-[14px] mb-[13px] border-[#e6e7eb]" />
        <div className="grid grid-cols-4 gap-x-[21px]">
          {totals.map(([t, n, I, sz]) => (
            <div key={t} className={card}>
              <div className="mt-[14px] flex h-[17px] items-center justify-end text-[#00f]"><I className={sz} /></div>
              <p className="leading-[16px] whitespace-nowrap">{t}</p>
              <p className="leading-[16px]">{n}</p>
            </div>
          ))}
        </div>
      </div>
    </div>
  );
}

function MiniApp({ children, dot, active }) {
  return (
    <span className={`relative flex h-[25px] w-[28px] items-center justify-center rounded-[3px] ${active ? "bg-[#f1f1f1]" : ""}`}>
      {children}
      {dot && <span className="absolute bottom-0 h-[2px] w-[4px] rounded-full bg-[#888]" />}
      {active && <span className="absolute bottom-0 h-[2px] w-[10px] rounded-full bg-[#1a84dc]" />}
    </span>
  );
}

function MiniTaskbar() {
  const i = "h-[15px] w-[15px]";
  return (
    <div className={`flex h-[30px] items-center border-t border-[#cfcfcf] bg-[#d9d9d9] ${ui}`}>
      <div className="flex min-w-0 flex-1 items-center gap-[4px] pl-[14px] text-[7px] leading-[10px]">
        <svg viewBox="0 0 16 17" className="h-[17px] w-[16px]" aria-hidden="true"><circle cx="6.500" cy="10" r="6.500" fill="#f39a1f" /><circle cx="11" cy="5" r="5" fill="#c42b1c" /><text x="9.500" y="7.500" fontSize="7" fill="#fff">1</text></svg>
        <div className="text-[#555]"><p className="text-[#333]">38°C</p><p>Sunny</p></div>
      </div>
      <div className="flex items-center">
        <MiniApp><WindowsLogo className={i} /></MiniApp>
        <span className="mr-[1px] ml-[3px] flex h-[19px] w-[138px] items-center gap-[7px] rounded-full bg-[#f6f6f6] pl-[7px] text-[8px] text-[#666]">
          <Icon w={9} h={9} box="0 0 19 19" sw={2.6}><circle cx="8" cy="8" r="6.500" /><path d="m13 13 5 5" /></Icon>Search
        </span>
        <MiniApp><TaskViewLogo className="h-[14px] w-[14px]" /></MiniApp>
        <MiniApp><svg viewBox="0 0 18 18" className="h-[18px] w-[18px]" aria-hidden="true"><path d="M1 16.500 2 13a7.500 7.500 0 1 1 3 3Z" fill="#6a5fc7" /><rect x="4.500" y="7.500" width="7" height="5" rx="1" fill="#fff" /><circle cx="13.500" cy="4.500" r="4.500" fill="#0a7bd4" /><path d="M13.500 2.500v4" stroke="#fff" /></svg></MiniApp>
        <MiniApp><svg viewBox="0 0 15 15" className={i} aria-hidden="true"><path d="M1 .5 7.500 4 14 .5v11L7.500 15 1 11.500Z" fill="#c4262e" /><path d="m4 4.500 3.500 2 3.500-2v5l-3.500 2-3.500-2Z" fill="#d9d9d9" /></svg></MiniApp>
        <MiniApp><EdgeLogo className={i} /></MiniApp>
        <MiniApp><svg viewBox="0 0 15 15" className={i} aria-hidden="true"><path d="M4.500 3V1h6v2" fill="none" stroke="#2aa0dc" /><rect y="3" width="15" height="12" rx="2" fill="#164e8c" /><path d="M4.500 6h2.700v2.700H4.500z" fill="#f25022" /><path d="M7.800 6h2.700v2.700H7.800z" fill="#7fba00" /><path d="M4.500 9.300h2.700V12H4.500z" fill="#00a4ef" /><path d="M7.800 9.300h2.700V12H7.800z" fill="#ffb900" /></svg></MiniApp>
        <MiniApp><FolderLogo className={i} /></MiniApp>
        <MiniApp dot><WhatsAppLogo solid className={i} /></MiniApp>
        <MiniApp dot><WordLogo className={i} /></MiniApp>
        <MiniApp dot><svg viewBox="0 0 15 15" className={i} aria-hidden="true"><rect width="15" height="15" rx="2" fill="#b30b00" /><path d="M3 11.500C6 10 8 6 7 3.500c0 3 2 6 5 6-3-.5-6 .5-9 2Z" fill="none" stroke="#fff" strokeWidth="1.100" /></svg></MiniApp>
        <MiniApp dot><svg viewBox="0 0 15 15" className={i} aria-hidden="true"><path d="m11 2.500-10 7.500M11 12.500 1 5" stroke="#1f8ad2" strokeWidth="2.400" /><path d="m10.500.5 4 1.700v10.600l-4 1.700Z" fill="#2aa3ef" /></svg></MiniApp>
        <MiniApp active><ChromeLogo className={i} /><span className="absolute top-0 right-0 flex h-[11px] w-[11px] items-center justify-center rounded-full bg-[#455a64] text-[6px] text-white">T</span></MiniApp>
      </div>
      <div className="flex min-w-0 flex-1 items-center justify-end gap-[6px] pr-[12px] text-right text-[7px] leading-[10px] text-[#333]">
        <span className="mr-[6px] rotate-180"><Chevron /></span>
        <span className="mr-[5px]"><CloudIcon w={11} /></span>
        <WifiIcon w={11} /><SpeakerIcon w={11} />
        <Icon w={11} h={7} box="0 0 11 7" sw={1}><rect x=".5" y=".5" width="8.500" height="6" rx="1.500" /><path d="M2 2h4v3H2z" fill="#222" /><path d="M10.500 2.500v2" /></Icon>
        <div className="ml-[5px]"><p>13:35</p><p className="whitespace-nowrap">03-06-2023</p></div>
        <BellIcon w={9} fill="#222" />
      </div>
    </div>
  );
}

const CloudIcon = ({ w = 20 }) => (
  <Icon w={w} h={Math.round(w * 0.7)} box="0 0 20 14" sw={1.3} color="#222"><path d="M5 13a4 4 0 0 1-.5-7.900A5.500 5.500 0 0 1 15 5.200 4 4 0 0 1 15.500 13Z" fill="#a9a9a9" /><path d="M3 12.500 11 7l7 4.500-2.500 1Z" fill="#eee" stroke="none" /></Icon>
);
const WifiIcon = ({ w = 20 }) => (
  <Icon w={w} h={Math.round(w * 0.8)} box="0 0 20 16" sw={1.4} color="#222"><path d="M1 5.500a13 13 0 0 1 18 0M4 8.700a8.700 8.700 0 0 1 12 0M6.700 11.500a4.800 4.800 0 0 1 6.600 0" /><circle cx="10" cy="14" r="1" fill="#222" /></Icon>
);
const SpeakerIcon = ({ w = 20 }) => (
  <Icon w={w} h={Math.round(w * 0.85)} box="0 0 20 17" sw={1.3} color="#222"><path d="M1 6h3l4.500-4v13L4 11H1ZM11.500 6a4 4 0 0 1 0 5M14 3.500a7 7 0 0 1 0 10M16.500 1.500a10.500 10.500 0 0 1 0 14" /></Icon>
);
const BellIcon = ({ w = 16, fill = "none" }) => (
  <Icon w={w} h={Math.round(w * 1.15)} box="0 0 16 18" sw={1.3} color="#222"><path d="M1 13.500 3 11V6.500a5 5 0 0 1 10 0V11l2 2.500ZM6 14.500a2 2 0 0 0 4 0" fill={fill} /></Icon>
);

/* ---------- document area ---------- */

function Document() {
  return (
    <main className="relative flex min-h-0 flex-1 overflow-hidden">
      <div className="min-w-0 flex-1 overflow-hidden bg-[#e5e5e5]">
        <article className={`mx-auto w-[1280px] max-w-full border-x border-[#c6c6c6] bg-white px-[153px] text-black ${serif}`}>
          <p className="-mt-[14px] h-[79px] text-right text-[26px] leading-[32px] text-[#808080]">MRUH</p>
          <Browser s={big} path="admin-dashboard"><Dashboard /><MiniTaskbar /></Browser>
          <p className="my-[29px] pl-[45px] text-center text-[26px] leading-[32px]">Fig:4.7 Admin Dash Board</p>
          <Browser s={small} path="admin-donor">
            <div className="flex h-[200px]"><div className="w-[88px] bg-[#363a42]" /><div className="flex-1 bg-[#f4f5f9]" /></div>
          </Browser>
        </article>
      </div>
      <LanguageBar className={`absolute top-[171px] right-[78px] h-[27px] w-[189px] pr-[3px] pl-[4px] text-[13px] ${arial}`} />
      <div className="flex w-[21px] shrink-0 flex-col items-center rounded-[10px] bg-[#f4f4f4] py-[6px]">
        <svg width="12" height="8" aria-hidden="true"><path d="M6 0 12 8H0Z" fill="#707070" /></svg>
        <span className="min-h-0 grow-[467]" />
        <span className="h-[21px] w-[11px] rounded-[4px] bg-[#757575]" />
        <span className="min-h-0 grow-[256]" />
        <svg width="12" height="8" aria-hidden="true"><path d="M6 8 12 0H0Z" fill="#707070" /></svg>
      </div>
    </main>
  );
}

function StatusBar() {
  return (
    <footer className="flex h-[28px] shrink-0 items-center border-t border-b border-t-white border-b-[#b0b0b0] bg-[#f4f4f4] pr-[11px] pl-[15px] text-[12px] whitespace-nowrap text-[#333]">
      <span className="w-[105px]">Page 23 of 39</span>
      <span className="w-[91px]">5481 words</span>
      <span className="w-[41px]"><Icon w={19} h={18} sw={1.2}><path d="M9 15.500 1 15V1.500h5c2 0 3 1 3 2v12M9 3.500c0-1 1-2 3-2h4V8M10.500 9.500l7 8M17.500 9.500l-7 8" /></Icon></span>
      <span className="w-[153px]">English (United States)</span>
      <button type="button" className="flex items-center gap-[4px] font-bold">
        <Icon w={19} h={18} sw={1.1}><circle cx="8" cy="2.500" r="1.800" /><path d="M1.500 4 6 6v4l-3 7 1.500.5L8 11l1.500 3M14.500 4 10 6v3M1.500 4l-.5 1.500M14.500 4l.5 1.500M11 10.500l7 7M18 10.500l-7 7" /></Icon>
        Accessibility: Investigate
      </button>
      <button type="button" className="ml-auto flex w-[84px] items-center gap-[4px]">
        <Icon w={18} h={18} sw={1.4}><path d="M4 1H1v4M14 1h3v4M4 17H1v-4M14 17h3v-4M5.500 4H10l3 3v7.500H5.500ZM9.500 4v3.500H13" /></Icon>Focus
      </button>
      <button type="button" aria-label="Read mode" className="flex w-[35px]"><Icon w={19} h={17} sw={1.3}><path d="M9.500 3 8 1.500H1V15h7l1.500 1L11 15h7V1.500h-7ZM9.500 3v13M3.500 5H7M3.500 8H7M3.500 11H7M12 5h3.500M12 8h3.500M12 11h3.500" /></Icon></button>
      <button type="button" aria-label="Print layout" className="flex h-full w-[50px] items-center justify-center bg-[#dedede]"><Icon w={15} h={18} sw={1.4}><path d="M1 1h13v16H1ZM3.500 4h8M3.500 7h8M3.500 10h8M3.500 13h8" /></Icon></button>
      <button type="button" aria-label="Web layout" className="ml-[16px]"><Icon w={19} h={18} sw={1.3}><path d="M7 14.500H1V1h15v6M3.500 4h10M3.500 7h5M3.500 10h3" /><circle cx="13" cy="12.500" r="4.800" /><path d="M8.500 12.500h9M13 8c-2.500 3-2.500 6 0 9M13 8c2.500 3 2.500 6 0 9" /></Icon></button>
      <button type="button" aria-label="Zoom out" className="ml-[21px]"><Icon w={12} sw={1.1}><path d="M1 6h10" /></Icon></button>
      <input type="range" aria-label="Zoom" min="10" max="190" defaultValue="108"
        className="mx-[5px] h-[14px] w-[125px] appearance-none bg-[linear-gradient(#666,#666)] bg-[length:100%_1px] bg-center bg-no-repeat [&::-webkit-slider-thumb]:h-[14px] [&::-webkit-slider-thumb]:w-[6px] [&::-webkit-slider-thumb]:appearance-none [&::-webkit-slider-thumb]:bg-[#666]" />
      <button type="button" aria-label="Zoom in"><Icon w={12} sw={1.1}><path d="M1 6h10M6 1v10" /></Icon></button>
      <span className="w-[47px] text-right">129%</span>
    </footer>
  );
}

/* ---------- system taskbar ---------- */

function TaskApp({ label, dot, active, children }) {
  return (
    <button type="button" aria-label={label} className={`relative flex h-[48px] w-[49px] items-center justify-center rounded-[5px] ${active ? "border border-[#e4e4e4] bg-[#efefef]" : ""}`}>
      {children}
      {dot && <span className="absolute bottom-0 h-[4px] w-[8px] rounded-full bg-[#808080]" />}
      {active && <span className="absolute bottom-0 h-[4px] w-[20px] rounded-full bg-[#0a7bd4]" />}
    </button>
  );
}

const Castle = () => (
  <svg viewBox="0 0 62 32" className="h-[32px] w-[62px] shrink-0" aria-hidden="true">
    <path d="M6 17C12 4 24 1 34 3c10 0 16 4 20 10v8H6Z" fill="#5e8f3e" />
    <path d="M14 9c4-5 10-5 14-2l-4 6ZM38 4c4 0 8 2 9 5l-8 1Z" fill="#8db75a" />
    <path d="M0 25c8-4 52-4 61 0-3 5-14 7-30 7S4 30 0 25Z" fill="#2ba4dd" />
    <path d="M6 18h14v9H5Z" fill="#d9a066" /><path d="M19 14h26v11H19Z" fill="#d89b63" />
    <path d="M25 10h8v10h-8Z" fill="#f4d7b0" /><path d="M34 9h9v12h-9Z" fill="#f0c8a0" />
    <path d="M46 14h11v12c-4 2-8 2-11 0Z" fill="#f1cf86" />
    <path d="m3 19 6-6 5 6ZM11 17l6-6 5 6Z" fill="#c9643f" /><path d="m24 11 2-3h7l1 3ZM33 10l2-3h7l2 3Z" fill="#b94c3c" />
    <path d="M44 15 52 1l7 14c-4 2-11 2-15 0Z" fill="#e09a2b" /><path d="M52 1 50 16h4Z" fill="#f4c04d" />
    <path d="M22 25v-4a3 3 0 0 1 6 0v4M31 25v-4a3 3 0 0 1 6 0v4M40 25v-4a2 2 0 0 1 4 0v4" fill="#6f4631" />
    <path d="M49 18h2v4h-2zM53 18h2v4h-2zM8 21h2v3H8zM13 20h2v3h-2zM27 13h2v3h-2zM36 13h2v3h-2zM39 13h2v3h-2z" fill="#8a4b38" />
    <path d="M3 27c3-4 13-4 19 1-7 3-16 3-19-1ZM42 28c5-4 13-4 17-1-4 3-12 4-17 1Z" fill="#b07b52" />
    <path d="M20 29c8-2 16-2 24 0" stroke="#8fdcf7" strokeWidth="1.500" fill="none" />
  </svg>
);

function Taskbar() {
  return (
    <div className="flex h-[59px] shrink-0 items-center bg-[#dadada] pb-[1px]">
      <button type="button" className="flex min-w-0 flex-1 items-center pl-[29px] text-left text-[14px] leading-[20px]">
        <svg viewBox="0 0 22 30" className="mr-[14px] h-[30px] w-[22px]" aria-hidden="true">
          <defs><linearGradient id="flame" x1="0" y1="0" x2="0.500" y2="1"><stop offset="0" stopColor="#f9b52b" /><stop offset="1" stopColor="#f2557a" /></linearGradient></defs>
          <path d="M3 17c-2-4 0-7 1-8l2 2c0-5 3-9 8-11-1 3 0 5 3 8s4 6 2 9Z" fill="url(#flame)" />
          <path d="M0 16h22c0 4-4 6-11 6S0 20 0 16Z" fill="#4a9cf0" /><path d="M8 22h6l-1 7a2 2 0 0 1-4 0Z" fill="#1f5fd8" />
        </svg>
        <span><span className="block text-[#1a1a1a]">Tennis</span><span className="block text-[#5a5a5a]">Australia - Unite...</span></span>
      </button>
      <div className="mr-[5px] flex items-center">
        <TaskApp label="Start"><WindowsLogo className="h-[29px] w-[29px]" /></TaskApp>
        <label className="mr-[6px] ml-[7px] flex h-[40px] w-[274px] items-center rounded-full border border-[#c8c8c8] bg-[#f5f5f5] pr-[2px] pl-[13px]">
          <Icon w={19} h={19} sw={2} color="#222"><circle cx="8" cy="8" r="6.800" /><path d="m13 13 5 5" /></Icon>
          <input aria-label="Search taskbar" placeholder="Search" className="ml-[12px] w-0 min-w-0 flex-1 bg-transparent text-[16px] outline-none placeholder:text-[#5a5a5a]" />
          <Castle />
        </label>
        <div className="flex gap-[6px]">
          <TaskApp label="Task view"><TaskViewLogo className="h-[29px] w-[29px]" /></TaskApp>
          <TaskApp label="File Explorer" dot><FolderLogo className="h-[28px] w-[30px]" /></TaskApp>
          <TaskApp label="Chrome"><ChromeLogo className="h-[30px] w-[30px]" /></TaskApp>
          <TaskApp label="YouTube"><svg viewBox="0 0 30 21" className="h-[21px] w-[30px]" aria-hidden="true"><rect width="30" height="21" rx="4" fill="#f00" /><path d="m12 6 8 4.500-8 4.500Z" fill="#fff" /></svg></TaskApp>
          <TaskApp label="WhatsApp"><WhatsAppLogo className="h-[30px] w-[30px]" /><span className="absolute top-[3px] right-[-1px] flex h-[20px] w-[26px] items-center justify-center rounded-full bg-[#0a74d0] text-[13px] text-white">25</span></TaskApp>
          <TaskApp label="Chrome profile" dot><ChromeLogo className="h-[30px] w-[30px]" /><span className="absolute top-[3px] right-[3px] flex h-[21px] w-[21px] items-center justify-center rounded-full bg-[#455a64] text-[11px] text-[#ddd]">T</span></TaskApp>
          <TaskApp label="Edge" dot><EdgeLogo className="h-[30px] w-[30px]" /></TaskApp>
          <TaskApp label="Word" active><WordLogo className="h-[30px] w-[30px]" /></TaskApp>
        </div>
      </div>
      <div className="flex min-w-0 flex-1 items-center justify-end pr-[25px]">
        <button type="button" aria-label="Hidden icons" className="mr-[23px]"><Icon w={14} h={10} sw={1.6} color="#222"><path d="m1.500 8 5.500-5.500L12.500 8" /></Icon></button>
        <span className="mr-[20px]"><CloudIcon /></span>
        <button type="button" aria-label="Network, volume and battery" className="mr-[20px] flex items-center gap-[10px]">
          <WifiIcon /><SpeakerIcon />
          <Icon w={20} h={17} sw={1.3} color="#222"><path d="M8 3.500h7a2.500 2.500 0 0 1 2.500 2.500v7a2.500 2.500 0 0 1-2.500 2.500H4A2.500 2.500 0 0 1 1.500 13v-2M19.500 7.500v3" /><path d="M5.500.5 1.500 6h3l-1 4 4-5.500h-3Z" fill="#222" strokeWidth=".5" /></Icon>
        </button>
        <button type="button" className="mr-[11px] text-right text-[15px] leading-[20px] whitespace-nowrap text-[#1a1a1a]"><span className="block">21:50</span><span className="block">03-08-2024</span></button>
        <button type="button" aria-label="Notifications" className="mr-[22px]"><BellIcon /></button>
        <button type="button" aria-label="Copilot">
          <svg viewBox="0 0 30 29" className="h-[29px] w-[30px]" aria-hidden="true">
            <defs>
              <linearGradient id="cpA" x1="0.500" y1="0" x2="0.200" y2="1"><stop offset="0" stopColor="#1289e8" /><stop offset="0.500" stopColor="#2fb573" /><stop offset="1" stopColor="#f5c518" /></linearGradient>
              <linearGradient id="cpB" x1="0.800" y1="0" x2="0.300" y2="1"><stop offset="0" stopColor="#8a4fe0" /><stop offset="0.600" stopColor="#ee5fa5" /><stop offset="1" stopColor="#f78b3c" /></linearGradient>
            </defs>
            <path d="M8 0h10c3 0 4 3 5 7h-4c-3 0-4 2-5 5l-2 5c-1 3-3 4-6 4H4c-4 0-5-3-4-7l3-10c1-3 2-4 5-4Z" fill="url(#cpA)" />
            <path d="M16 0h2c3 0 4 3 5 7h-4c-2-2-2-5-3-7Z" fill="#1a3fc0" />
            <path d="M20 7h6c4 0 4 4 3 7l-3 7c-1 3-3 4-6 4h-8c2-1 3-3 4-5l3-10c.3-1.500.5-2.500 1-3Z" fill="url(#cpB)" />
            <rect x="7" y="19" width="23" height="10" rx="2" fill="#ffc400" />
            <text x="18.500" y="27" textAnchor="middle" fontSize="8" fontWeight="800" fill="#222">PRE</text>
          </svg>
        </button>
      </div>
    </div>
  );
}

export default function App() {
  return (
    <div className={`flex h-screen flex-col overflow-hidden bg-[#e5e5e5] ${ui}`}>
      <TitleBar />
      <Tabs />
      <Ribbon />
      <Document />
      <StatusBar />
      <Taskbar />
    </div>
  );
}
